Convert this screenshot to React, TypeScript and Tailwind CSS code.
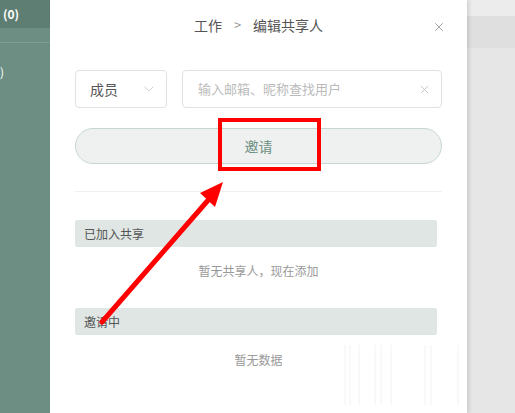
import { ChevronDown, X } from 'lucide-react'

const font = { fontFamily: '"Noto Sans CJK SC", "Noto Sans", sans-serif' }

function Sidebar() {
  return (
    <div className="w-[50px] shrink-0 bg-[#6d8f83] flex flex-col">
      <div className="h-[28px] bg-[#5f7e73] flex items-center pl-[3px] text-[12px] text-white font-semibold">(0)</div>
      <div className="h-[14px]" />
      <div className="h-px bg-[#7f9e93]" />
      <div className="h-[22px]" />
      <div className="text-[12px] text-white leading-[14px]">)</div>
    </div>
  )
}

function SectionBand({ label }: { label: string }) {
  return (
    <div className="w-[362px] h-[27px] rounded-[2px] bg-[#dfe6e4] flex items-center pl-[9px] text-[12px] text-[#555]">
      {label}
    </div>
  )
}

function Panel() {
  return (
    <div className="w-[417px] shrink-0 bg-white px-[25px] flex flex-col shadow-[2px_0_4px_rgba(0,0,0,0.12)] z-10">
      <div className="relative h-[50px] flex items-center justify-center text-[14px] text-[#555]">
        <span>工作</span>
        <span className="mx-[12px] text-[#999] text-[13px]">&gt;</span>
        <span>编辑共享人</span>
        <X className="absolute right-[-4px] top-[20px] w-[14px] h-[14px] text-[#888]" strokeWidth={1.3} />
      </div>
      <div className="mt-[20px] flex gap-[15px]">
        <div className="w-[92px] h-[38px] border border-[#e2e2e2] rounded-[4px] flex items-center justify-between pl-[14px] pr-[9px] text-[14px] text-[#555]">
          <span>成员</span>
          <ChevronDown className="w-[16px] h-[16px] text-[#c8c8c8]" strokeWidth={1.3} />
        </div>
        <div className="flex-1 h-[38px] border border-[#e2e2e2] rounded-[4px] flex items-center justify-between pl-[15px] pr-[10px] text-[13px] text-[#bbb]">
          <span>输入邮箱、昵称查找用户</span>
          <X className="w-[13px] h-[13px] text-[#bbb]" strokeWidth={1.5} />
        </div>
      </div>
      <div className="mt-[20px] h-[36px] rounded-full bg-[#eef1ef] border border-[#c6d7d1] flex items-center justify-center text-[14px] text-[#6d8f83]">
        邀请
      </div>
      <div className="mt-[27px] h-px bg-[#f0f0f0]" />
      <div className="mt-[28px]">
        <SectionBand label="已加入共享" />
      </div>
      <div className="h-[61px] pt-[15px] text-center text-[12px] leading-[18px] text-[#999]">暂无共享人，现在添加</div>
      <SectionBand label="邀请中" />
      <div className="pt-[16px] text-center text-[12px] leading-[18px] text-[#999]">暂无数据</div>
    </div>
  )
}

function RightArea() {
  return (
    <div className="flex-1 bg-[#e6e6e6] flex flex-col">
      <div className="h-[16px] bg-[#ececec]" />
      <div className="h-[32px] bg-[#dfdfdf]" />
    </div>
  )
}

export default function App() {
  return (
    <div className="relative w-[515px] h-[413px] overflow-hidden flex" style={font}>
      <Sidebar />
      <Panel />
      <RightArea />
      <svg className="absolute left-0 top-0 z-20" width="515" height="413" viewBox="0 0 515 413">
        <g stroke="#f2f2f2" strokeWidth="1">
          <line x1="345" y1="345" x2="345" y2="405" />
          <line x1="350" y1="345" x2="350" y2="405" />
          <line x1="359" y1="345" x2="359" y2="405" />
          <line x1="375" y1="345" x2="375" y2="405" />
          <line x1="381" y1="345" x2="381" y2="405" />
          <line x1="391" y1="345" x2="391" y2="405" />
          <line x1="425" y1="345" x2="425" y2="405" />
          <line x1="431" y1="345" x2="431" y2="405" />
          <line x1="458" y1="345" x2="458" y2="405" />
        </g>
        <line x1="102" y1="322" x2="210" y2="198" stroke="#ff0000" strokeWidth="5" strokeLinecap="round" />
        <polygon points="223,182 200,193 215,207" fill="#ff0000" />
      </svg>
      <div className="absolute left-[218px] top-[118px] w-[103px] h-[53px] border-[4px] border-[#ff0000] z-20" />
    </div>
  )
}
